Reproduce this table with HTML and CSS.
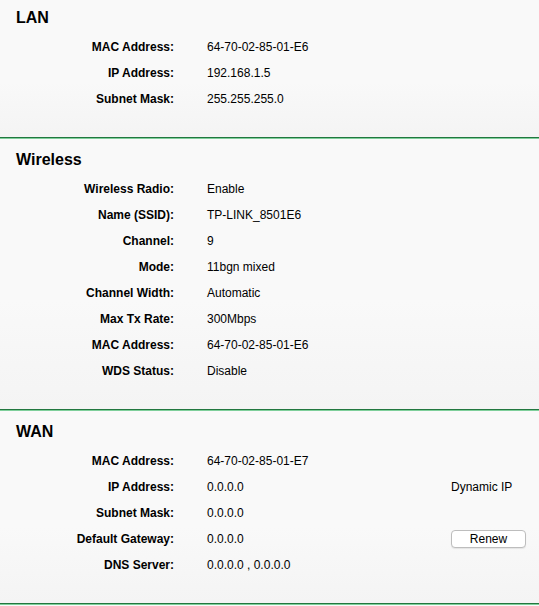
FILE: index.html
```html
<!DOCTYPE html>
<html lang="en">

<head>
    <meta charset="UTF-8">
    <meta name="viewport" content="width=device-width, initial-scale=1.0">
    <title>Status</title>
    <link rel="stylesheet" href="styles.css">
</head>

<body>
    <div class="section">
        <h2 class="section-title">LAN</h2>
        <div class="info-row">
            <span class="info-label">MAC Address:</span>
            <span class="info-value">64-70-02-85-01-E6</span>
        </div>
        <div class="info-row">
            <span class="info-label">IP Address:</span>
            <span class="info-value">192.168.1.5</span>
        </div>
        <div class="info-row">
            <span class="info-label">Subnet Mask:</span>
            <span class="info-value">255.255.255.0</span>
        </div>
    </div>

    <div class="section">
        <h2 class="section-title">Wireless</h2>
        <div class="info-row">
            <span class="info-label">Wireless Radio:</span>
            <span class="info-value">Enable</span>
        </div>
        <div class="info-row">
            <span class="info-label">Name (SSID):</span>
            <span class="info-value">TP-LINK_8501E6</span>
        </div>
        <div class="info-row">
            <span class="info-label">Channel:</span>
            <span class="info-value">9</span>
        </div>
        <div class="info-row">
            <span class="info-label">Mode:</span>
            <span class="info-value">11bgn mixed</span>
        </div>
        <div class="info-row">
            <span class="info-label">Channel Width:</span>
            <span class="info-value">Automatic</span>
        </div>
        <div class="info-row">
            <span class="info-label">Max Tx Rate:</span>
            <span class="info-value">300Mbps</span>
        </div>
        <div class="info-row">
            <span class="info-label">MAC Address:</span>
            <span class="info-value">64-70-02-85-01-E6</span>
        </div>
        <div class="info-row">
            <span class="info-label">WDS Status:</span>
            <span class="info-value">Disable</span>
        </div>
    </div>

    <div class="section">
        <h2 class="section-title">WAN</h2>
        <div class="info-row">
            <span class="info-label">MAC Address:</span>
            <span class="info-value">64-70-02-85-01-E7</span>
        </div>
        <div class="info-row">
            <span class="info-label">IP Address:</span>
            <span class="info-value">0.0.0.0</span>
            <span class="info-extra">Dynamic IP</span>
        </div>
        <div class="info-row">
            <span class="info-label">Subnet Mask:</span>
            <span class="info-value">0.0.0.0</span>
        </div>
        <div class="info-row">
            <span class="info-label">Default Gateway:</span>
            <span class="info-value">0.0.0.0</span>
            <span class="info-extra"><button type="button" class="btn">Renew</button></span>
        </div>
        <div class="info-row">
            <span class="info-label">DNS Server:</span>
            <span class="info-value">0.0.0.0 , 0.0.0.0</span>
        </div>
    </div>
</body>

</html>
```

FILE: styles.css
```css
body {
    margin: 0;
    background-color: #f9f9f9;
    color: #000000;
    font-family: "Liberation Sans", Arial, sans-serif;
    font-size: 12px;
}

.section {
    padding: 12px 0 25px;
    border-bottom: 1px solid #22773f;
    box-shadow: 0 1px 0 #7fcf9b;
    margin-bottom: 1px;
    background: linear-gradient(#f9f9f9 60%, #f4f4f4);
}

.section:first-child {
    padding-top: 9px;
}

.section-title {
    margin: 0 0 7px 16px;
    font-size: 16px;
    line-height: 18px;
    font-weight: bold;
}

.info-row {
    display: grid;
    grid-template-columns: 174px 211px auto;
    column-gap: 33px;
    align-items: center;
    height: 26px;
}

.info-label {
    text-align: right;
    font-weight: bold;
}

.btn {
    display: block;
    width: 75px;
    height: 18px;
    padding: 0;
    background-color: #ffffff;
    border: 1px solid #bdbdbd;
    border-radius: 4px;
    box-shadow: 0 1px 1px rgba(0, 0, 0, 0.08);
    font-family: "Liberation Sans", Arial, sans-serif;
    font-size: 12px;
    color: #000000;
}
```
